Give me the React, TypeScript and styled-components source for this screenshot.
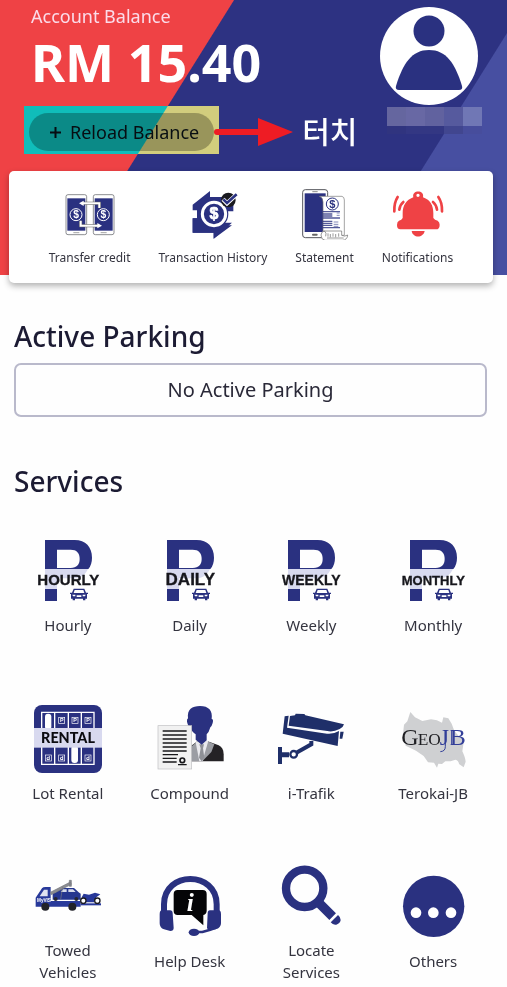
import React from "react";
import styled, { createGlobalStyle } from "styled-components";

const NAVY = "#2a3180";
const RED = "#ef4245";

const GlobalStyle = createGlobalStyle`
  * { box-sizing: border-box; }
  body {
    margin: 0;
    background: #fefefe;
    color: #1c1b33;
    font-family: "Noto Sans", "Noto Sans CJK KR", sans-serif;
  }
`;

const Page = styled.main`
  display: flex;
  flex-direction: column;
`;

const Hero = styled.header`
  display: flex;
  justify-content: space-between;
  padding: 4px 25px 121px 24px;
  background: linear-gradient(122deg, ${RED} 198px, #2d3282 199px, #2d3282 447px, #474fa1 448px);
  color: #fff;
`;

const Account = styled.div`
  display: flex;
  flex-direction: column;
`;

const AccountLabel = styled.span`
  padding-left: 7px;
  font-size: 18px;
  line-height: 24px;
  color: #fbdcea;
`;

const Amount = styled.strong`
  padding-left: 7px;
  font-size: 52px;
  line-height: 68px;
  font-weight: 700;
`;

const ReloadRow = styled.div`
  display: flex;
  align-items: center;
  margin-top: 10px;
`;

const Highlight = styled.div`
  display: flex;
  padding: 7px 5px 3px;
  backdrop-filter: invert(1);
`;

const ReloadButton = styled.button`
  display: flex;
  align-items: center;
  gap: 8px;
  height: 38px;
  padding: 0 15px 0 20px;
  border: 0;
  border-radius: 19px;
  background: rgba(0, 0, 0, 0.27);
  color: #070d12;
  font: inherit;
  font-size: 18px;
  line-height: 24px;
  white-space: nowrap;
`;

const Arrow = styled.svg`
  position: relative;
  width: 80px;
  height: 28px;
  margin-left: -6px;
  margin-top: 4px;
`;

const TouchNote = styled.span`
  padding-left: 9px;
  font-family: "Noto Sans CJK KR", sans-serif;
  font-size: 30px;
  line-height: 40px;
  font-weight: 500;
`;

const Profile = styled.div`
  display: flex;
  flex-direction: column;
  align-items: center;
  padding-top: 2px;
  gap: 1px;
`;

const AvatarButton = styled.button`
  display: block;
  width: 100px;
  height: 100px;
  padding: 0;
  border: 0;
  background: none;
`;

const Mosaic = styled.div`
  display: grid;
  grid-template-columns: repeat(5, 19px);
  grid-template-rows: 19px 8px;
  margin-left: 12px;
`;

const Tile = styled.span<{ $color: string }>`
  background: ${(p) => p.$color};
`;

const QuickCard = styled.nav`
  display: flex;
  justify-content: center;
  gap: 28px;
  margin: -104px 14px 0 9px;
  padding: 17px 0 16px;
  border-radius: 5px;
  background: #fff;
  box-shadow: 0 3px 6px rgba(0, 0, 0, 0.3);
`;

const QuickLink = styled.a`
  display: flex;
  flex-direction: column;
  align-items: center;
  gap: 9px;
  color: #34343f;
  font-size: 12px;
  line-height: 18px;
  text-decoration: none;
  white-space: nowrap;
`;

const QuickSvg = styled.svg`
  width: 52px;
  height: 52px;
`;

const Section = styled.section`
  display: flex;
  flex-direction: column;
  padding: 0 20px 0 14px;
`;

const Heading = styled.h2<{ $top: number }>`
  margin: ${(p) => p.$top}px 0 0;
  font-size: 28px;
  line-height: 36px;
  font-weight: 500;
`;

const EmptyBox = styled.p`
  margin: 9px 0 0;
  padding: 12px;
  border: 2px solid #b9b9cb;
  border-radius: 7px;
  font-size: 20px;
  line-height: 26px;
  text-align: center;
  color: #2a2938;
`;

const ServiceGrid = styled.div`
  display: grid;
  grid-template-columns: repeat(4, 1fr);
  grid-auto-rows: minmax(121px, auto);
  row-gap: 47px;
  align-items: center;
  margin: 27px 13px 3px 7px;
`;

const ServiceLink = styled.a`
  display: flex;
  flex-direction: column;
  align-items: center;
  gap: 9px;
  padding: 0 20px;
  color: #34343f;
  font-size: 15px;
  line-height: 22px;
  text-align: center;
  text-decoration: none;
`;

const ServiceSvg = styled.svg`
  width: 68px;
  height: 68px;
  overflow: visible;
`;

const SANS = "Liberation Sans, sans-serif";
const SERIF = "Liberation Serif, serif";

function Quick({ children }: { children: React.ReactNode }) {
  return <QuickSvg viewBox="0 0 156 156" aria-hidden="true">{children}</QuickSvg>;
}

function Service({ children }: { children: React.ReactNode }) {
  return <ServiceSvg viewBox="0 0 204 204" aria-hidden="true">{children}</ServiceSvg>;
}

function Avatar() {
  return (
    <svg viewBox="0 0 100 100" width="100" height="100" aria-hidden="true">
      <circle cx="50" cy="50" r="49" fill="#fff" />
      <circle cx="50" cy="25" r="15.500" fill={NAVY} />
      <path d="M50 44C67 44 76 57 83 80Q84 84 80 84H20Q16 84 17 80C24 57 33 44 50 44Z" fill={NAVY} />
    </svg>
  );
}

function TransferIcon() {
  const arrows = "M106 60V46H54M50 98V113H104";
  return (
    <Quick>
      {[6, 88].map((x) => (
        <g key={x}>
          <rect x={x} y="20" width="62" height="120" rx="6" fill="#fff" stroke="#55565c" strokeWidth="2" />
          <rect x={x + 4} y="31" width="54" height="97" fill={NAVY} />
          <path d={`M${x + 22} 134h18`} stroke="#777" strokeWidth="2" />
          <circle cx={x + 30} cy="80" r="18" fill={NAVY} stroke="#fff" strokeWidth="3" />
          <text x={x + 30} y="91" textAnchor="middle" fontFamily={SANS} fontSize="31" fontWeight="700" fill="#fff">$</text>
        </g>
      ))}
      <path d={arrows} fill="none" stroke="#666" strokeWidth="9" />
      <path d={arrows} fill="none" stroke="#fff" strokeWidth="6" />
      <path d="M45 46l14-8v16zM114 113l-14-8v16z" fill="#fff" />
    </Quick>
  );
}

function HistoryIcon() {
  return (
    <Quick>
      <path d="M17 50L69 9V27H139V70H124L30 94V67H17ZM17 91H35L110 94V104H135L80 152V134H17Z" fill={NAVY} />
      <path d="M17 91H60V112H135L80 152V134H17Z" fill={NAVY} />
      <circle cx="81" cy="78" r="43" fill={NAVY} />
      <circle cx="81" cy="78" r="35" fill={NAVY} stroke="#fff" strokeWidth="9" />
      <text x="81" y="94" textAnchor="middle" fontFamily={SANS} fontSize="48" fontWeight="700" fill="#fff" stroke="#fff" strokeWidth="2">$</text>
      <circle cx="124" cy="36" r="22" fill="#1a1a1f" />
      <path d="M108 34L120 46L147 21" fill="none" stroke="#fff" strokeWidth="13" />
      <path d="M109 34L120 45L149 19" fill="none" stroke={NAVY} strokeWidth="8" />
    </Quick>
  );
}

function StatementIcon() {
  return (
    <Quick>
      <rect x="11" y="5" width="75" height="144" rx="8" fill="#fff" stroke="#55565c" strokeWidth="3" />
      <rect x="17" y="16" width="63" height="116" fill={NAVY} />
      <path d="M40 11h16" stroke="#555" strokeWidth="2" />
      <rect x="39" y="137" width="17" height="6" rx="3" fill="#666" />
      <path d="M61 25H129Q136 27 136 36V142H72V42Q72 28 61 25Z" fill="#fff" stroke="#777" strokeWidth="2" />
      <circle cx="100" cy="48" r="18" fill="#fff" stroke={NAVY} strokeWidth="3" />
      <text x="100" y="60" textAnchor="middle" fontFamily={SANS} fontSize="33" fontWeight="700" fill={NAVY}>$</text>
      <path d="M71 71H123M71 78H100M71 84H100M71 90H123M71 100H100M71 106H100M71 112H100M71 119H123" stroke={NAVY} strokeWidth="4" opacity=".8" />
      <path d="M113 75H122M113 82H122M104 102H118M104 109H118M104 115H118" stroke="#8388b9" strokeWidth="3" />
      <path d="M73 129H128V142Q137 147 146 141Q145 156 130 157H78Q66 155 66 141Q67 130 76 129Q84 134 80 145" fill="#fff" stroke="#666" strokeWidth="2" />
      <path d="M87 136V146M94 138V148M102 136V146M110 138V148M119 136V146M84 150H134" stroke="#666" strokeWidth="2" />
    </Quick>
  );
}

function BellIcon() {
  return (
    <Quick>
      <g fill={RED}>
        <path fillRule="evenodd" d="M64 28C58 5 99 5 93 28C116 36 124 53 124 76V90Q128 96 137 98Q143 102 143 110Q143 124 132 124H25Q15 124 15 111Q15 101 21 98Q29 96 32 90V76C32 53 42 36 64 28ZM78 17A5 5 0 1 0 78 27A5 5 0 1 0 78 17Z" />
        <path d="M59 129H98C94 151 62 151 59 129Z" />
      </g>
      <path d="M17 27Q6 44 7 70M34 42Q24 50 22 65M139 27Q151 44 150 70M123 42Q133 50 135 65" fill="none" stroke={RED} strokeWidth="8" strokeLinecap="round" />
    </Quick>
  );
}

function ParkingIcon({ word, size }: { word: string; size: number }) {
  return (
    <Service>
      <path d="M33 96H162C152 115 140 124 120 124H69V156H33Z" fill="#d8daef" />
      <path fillRule="evenodd" d="M33 9H122C155 9 174 30 174 62Q174 83 163 96H33ZM69 38V93H110C128 93 137 82 137 66C137 48 128 38 110 38Z" fill={NAVY} />
      <path d="M33 156H69V192H33Z" fill={NAVY} />
      <text x="103" y="144" textAnchor="middle" fontFamily={SANS} fontSize={size * 3} fontWeight="700" fill="#17171c" stroke="#17171c">{word}</text>
      <g fill={NAVY}>
        <path fillRule="evenodd" d="M119 155H151L156 167H162V171H159V185H154V190H147V185H123V190H116V185H111V171H108V167H114ZM122 159L119 168H151L148 159Z" />
        <path d="M115 173h9v5h-7zM155 173h-9v5h7zM128 175h14v5h-14z" fill="#fff" />
      </g>
    </Service>
  );
}

function RentalIcon() {
  return (
    <Service>
      <rect width="204" height="204" rx="24" fill={NAVY} />
      <path d="M23 22H180V178H23ZM62 22V178M103 22V178M142 22V178" fill="none" stroke="#fff" strokeWidth="4" />
      <rect x="33" y="26" width="19" height="48" rx="9" fill="#fff" />
      <rect x="112" y="122" width="20" height="52" rx="9" fill="#fff" />
      <rect y="69" width="204" height="59" fill="#d8d9ef" />
      {[[83, 46, 0], [123, 46, 0], [162, 46, 0], [43, 159, 180], [83, 159, 180], [162, 159, 180]].map(([x, y, turn]) => (
        <g key={`${x}-${y}`} transform={`rotate(${turn} ${x} ${y})`}>
          <rect x={x - 9} y={y - 9} width="18" height="18" fill={NAVY} stroke="#fff" strokeWidth="2" />
          <text x={x} y={y + 6} textAnchor="middle" fontFamily={SANS} fontSize="16" fontWeight="700" fill="#fff">P</text>
        </g>
      ))}
      <text x="102" y="115" textAnchor="middle" fontFamily="Lato, sans-serif" fontSize="43" fontWeight="900" fill="#0b0b10">RENTAL</text>
    </Service>
  );
}

function CompoundIcon() {
  return (
    <Service>
      <path d="M106 122L125 108H153L188 121Q203 128 203 148V169H106Z" fill="#242225" />
      <path d="M108 123L125 108H153L175 118L166 141L139 169H106Z" fill="#9b9da3" />
      <path d="M119 112L135 104L157 108L139 169H130Z" fill="#e9e9ed" />
      <path d="M130 118H144L141 130L145 158L137 169L129 158L134 130Z" fill="#8e9096" />
      <path d="M96 40C93 13 108 3 132 3C158 3 171 17 167 42Q173 42 170 54Q167 65 163 67Q159 82 152 88V106L137 119L119 104V88Q108 82 103 67Q96 64 93 50Q92 42 96 40Z" fill={NAVY} />
      <rect x="6" y="62" width="101" height="130" fill="#f1f1f1" stroke="#bfbfc2" strokeWidth="2" />
      <path d="M20 78H92M20 90H92M20 102H92M20 114H92M20 126H92M20 138H92M20 149H66M20 160H62M20 171H62M66 179H92" stroke="#18181b" strokeWidth="4" />
      <circle cx="79" cy="166" r="7" fill="none" stroke="#18181b" strokeWidth="5" />
    </Service>
  );
}

function CameraIcon() {
  return (
    <Service>
      <g fill="#1f2f69">
        <path d="M23 34L35 32L30 68L150 86Q169 88 186 78L182 123L17 86Z" />
        <path d="M39 33L54 31L56 26L82 27L85 31L201 58Q199 67 188 72Q168 82 151 78L35 62Z" />
        <path d="M190 80H200L196 101H188Z" />
        <path d="M3 126H15V142H36V157H15V177H3Z" />
      </g>
      <path d="M50 148L103 118V108" fill="none" stroke="#1f2f69" strokeWidth="12" />
      <circle cx="50" cy="148" r="10" fill="#fff" stroke="#1f2f69" strokeWidth="7" />
    </Service>
  );
}

function GeoIcon() {
  return (
    <Service>
      <path d="M34 21L48 37L70 48L96 43Q115 44 129 53L133 37L148 40L158 56L165 75Q179 97 195 105L190 139Q199 158 200 170L194 187L180 177Q179 166 169 164L155 169H139L129 177L118 176L114 188L105 173L87 172L74 153L51 137L20 122L12 88L15 59L25 49Z" fill="#cfd0d2" />
      <text x="7" y="120" fontFamily={SERIF} fontSize="72" fill="#1e1e22">G</text>
      <text x="56" y="120" fontFamily={SERIF} fontSize="52" fill="#1e1e22">EO</text>
      <g fill="#333f99" fontFamily={SERIF}>
        <text x="122" y="120" fontSize="72">J</text>
        <text x="152" y="120" fontSize="72">B</text>
      </g>
      <path d="M139 75V125Q139 139 124 140M158 75V120" fill="none" stroke="#333f99" strokeWidth="3" />
    </Service>
  );
}

function TowIcon() {
  return (
    <Service>
      <path d="M5 134V107L24 79Q27 75 34 75H50V117H140V134Z" fill="#28399a" />
      <path d="M17 103L30 83H41V103Z" fill="#dfe2f0" />
      <text x="9" y="120" fontFamily={SANS} fontSize="14" fontWeight="700" fill="#fff">MyVIS</text>
      <path d="M56 113V94L66 91L80 78H120L134 91L140 95V113Z" fill="#25368f" />
      <path d="M80 90L87 82H98V90ZM103 82H117L125 90H103Z" fill="#d7dbea" />
      <path d="M49 91L109 60L112 67L52 98ZM106 55H112V73H106ZM86 74L80 112" fill="#8b8c91" stroke="#77787e" strokeWidth="2" />
      <path d="M140 127H201" stroke="#28399a" strokeWidth="6" />
      <path d="M143 106L149 95L165 98L183 92L199 97L187 106L180 121H157Z" fill="#28399a" />
      {[148, 190].map((x) => (
        <circle key={x} cx={x} cy="116" r="8" fill="#fff" stroke="#1c1c22" strokeWidth="4" />
      ))}
      {[65, 127].map((x) => (
        <circle key={x} cx={x} cy="111" r="6" fill="#252630" />
      ))}
      {[34, 115].map((x) => (
        <circle key={x} cx={x} cy="134" r="12" fill="#222229" />
      ))}
    </Service>
  );
}

function HelpIcon() {
  return (
    <Service>
      <path d="M24 117V94C24 -7 182 -7 182 94V117" fill="none" stroke={NAVY} strokeWidth="18" />
      <path d="M18 112H42Q50 112 50 121L53 165Q53 174 43 174L24 169Q11 165 11 151V124Q11 112 18 112ZM188 112H162Q155 112 155 121L153 165Q154 171 162 171L179 169Q195 165 195 151V124Q195 112 188 112Z" fill={NAVY} />
      <path d="M179 164Q159 172 139 177H119" fill="none" stroke={NAVY} strokeWidth="8" />
      <ellipse cx="114" cy="178" rx="16" ry="11" fill={NAVY} />
      <path d="M65 51H140Q152 51 152 63V113Q152 123 142 126V157L107 126H65Q53 126 53 114V63Q53 51 65 51Z" fill="#050507" />
      <text x="103" y="113" textAnchor="middle" fontFamily={SERIF} fontSize="76" fontStyle="italic" fontWeight="700" fill="#fff">i</text>
    </Service>
  );
}

function LocateIcon() {
  return (
    <Service>
      <circle cx="83" cy="79" r="56" fill="none" stroke={NAVY} strokeWidth="25" />
      <path d="M122 119L167 164" stroke={NAVY} strokeWidth="28" />
      <path d="M183 159L161 181Q168 190 178 188Q190 184 191 174Q191 165 183 159Z" fill={NAVY} />
      <path d="M184 153L155 182" stroke="#fefefe" strokeWidth="5" />
    </Service>
  );
}

function OthersIcon() {
  return (
    <Service>
      <circle cx="104" cy="100" r="92" fill={NAVY} />
      {[51, 103, 156].map((x) => (
        <circle key={x} cx={x} cy="119" r="16" fill="#fff" />
      ))}
    </Service>
  );
}

const mosaicColors = [
  "#65669f", "#6868a4", "#61629f", "#565a9e", "#7077b5",
  "#30347f", "#333783", "#333783", "#41468f", "#474d9c",
];

const quickLinks = [
  { label: "Transfer credit", icon: <TransferIcon /> },
  { label: "Transaction History", icon: <HistoryIcon /> },
  { label: "Statement", icon: <StatementIcon /> },
  { label: "Notifications", icon: <BellIcon /> },
];

const services = [
  { label: "Hourly", icon: <ParkingIcon word="HOURLY" size={15} /> },
  { label: "Daily", icon: <ParkingIcon word="DAILY" size={17} /> },
  { label: "Weekly", icon: <ParkingIcon word="WEEKLY" size={14} /> },
  { label: "Monthly", icon: <ParkingIcon word="MONTHLY" size={13} /> },
  { label: "Lot Rental", icon: <RentalIcon /> },
  { label: "Compound", icon: <CompoundIcon /> },
  { label: "i-Trafik", icon: <CameraIcon /> },
  { label: "Terokai-JB", icon: <GeoIcon /> },
  { label: "Towed Vehicles", icon: <TowIcon /> },
  { label: "Help Desk", icon: <HelpIcon /> },
  { label: "Locate Services", icon: <LocateIcon /> },
  { label: "Others", icon: <OthersIcon /> },
];

export default function App() {
  return (
    <Page>
      <GlobalStyle />
      <Hero>
        <Account>
          <AccountLabel>Account Balance</AccountLabel>
          <Amount>RM 15.40</Amount>
          <ReloadRow>
            <Highlight>
              <ReloadButton type="button">
                <svg width="13" height="13" viewBox="0 0 13 13" aria-hidden="true">
                  <path d="M6.500 1V12M1 6.500H12" stroke="#070d12" strokeWidth="2" />
                </svg>
                Reload Balance
              </ReloadButton>
            </Highlight>
            <Arrow viewBox="0 0 80 28" aria-hidden="true">
              <path d="M4 14H46" stroke="#ee1c24" strokeWidth="6" strokeLinecap="round" />
              <path d="M45 0L80 14L45 28Z" fill="#ee1c24" />
            </Arrow>
            <TouchNote lang="ko">터치</TouchNote>
          </ReloadRow>
        </Account>
        <Profile>
          <AvatarButton type="button" aria-label="Profile">
            <Avatar />
          </AvatarButton>
          <Mosaic aria-hidden="true">
            {mosaicColors.map((color, i) => (
              <Tile key={i} $color={color} />
            ))}
          </Mosaic>
        </Profile>
      </Hero>
      <QuickCard>
        {quickLinks.map(({ label, icon }) => (
          <QuickLink key={label} href="#">
            {icon}
            {label}
          </QuickLink>
        ))}
      </QuickCard>
      <Section>
        <Heading $top={35}>Active Parking</Heading>
        <EmptyBox>No Active Parking</EmptyBox>
        <Heading $top={46}>Services</Heading>
      </Section>
      <ServiceGrid>
        {services.map(({ label, icon }) => (
          <ServiceLink key={label} href="#">
            {icon}
            {label}
          </ServiceLink>
        ))}
      </ServiceGrid>
    </Page>
  );
}
